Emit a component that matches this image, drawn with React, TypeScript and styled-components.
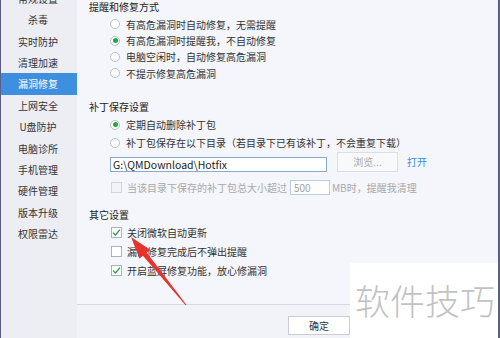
import React from 'react';
import styled, { createGlobalStyle } from 'styled-components';

const GlobalStyle = createGlobalStyle`
  body {
    margin: 0;
    background: #fff;
    font-family: "Noto Sans CJK SC", "Noto Sans", sans-serif;
  }
`;

const Window = styled.div`
  position: relative;
  width: 500px;
  height: 338px;
  box-sizing: border-box;
  display: flex;
  border-left: 1px solid #5b5f86;
  border-right: 2px solid #5b5f86;
  overflow: hidden;
  font-size: 10px;
  color: #333;
`;

const Sidebar = styled.div`
  width: 76px;
  flex-shrink: 0;
  background: #eceef4;
  overflow: hidden;
`;

const NavList = styled.ul`
  list-style: none;
  margin: -12.2px 0 0;
  padding: 0;
`;

const NavItem = styled.li<{ $active?: boolean }>`
  height: 21.4px;
  line-height: 21.4px;
  text-align: center;
  padding-right: 2px;
  background: ${(p) => (p.$active ? '#3f8fe0' : 'transparent')};
  color: ${(p) => (p.$active ? '#fff' : '#333')};
`;

const Main = styled.div`
  flex: 1;
  display: flex;
  flex-direction: column;
  background: #f4f6fc;
`;

const Content = styled.div`
  flex: 1;
  padding-left: 12px;
`;

const Title = styled.div<{ $top: number }>`
  margin-top: ${(p) => p.$top}px;
  height: 12px;
  line-height: 12px;
  color: #222;
`;

const OptionList = styled.div<{ $top: number }>`
  margin-top: ${(p) => p.$top}px;
  padding-left: 21px;
`;

const Option = styled.div<{ $h: number; $disabled?: boolean }>`
  display: flex;
  align-items: center;
  height: ${(p) => p.$h}px;
  color: ${(p) => (p.$disabled ? '#a9a9a9' : '#333')};
  white-space: nowrap;
`;

const Radio = styled.span<{ $checked?: boolean }>`
  position: relative;
  width: 10px;
  height: 10px;
  box-sizing: border-box;
  border: 1px solid #bcbfc7;
  border-radius: 50%;
  background: #fff;
  margin-right: 6px;
  flex-shrink: 0;

  &::after {
    content: '';
    display: ${(p) => (p.$checked ? 'block' : 'none')};
    position: absolute;
    left: 1.5px;
    top: 1.5px;
    width: 5px;
    height: 5px;
    border-radius: 50%;
    background: #1fa845;
  }
`;

const Box = styled.span<{ $disabled?: boolean }>`
  display: flex;
  align-items: center;
  justify-content: center;
  width: 11px;
  height: 11px;
  box-sizing: border-box;
  border: 1px solid ${(p) => (p.$disabled ? '#d3d5db' : '#aeb1b8')};
  background: ${(p) => (p.$disabled ? '#f2f3f6' : '#fff')};
  margin: 0 5px 0 1px;
  flex-shrink: 0;
`;

const PathRow = styled.div`
  display: flex;
  align-items: flex-end;
  height: 20px;
  padding-left: 21px;
`;

const PathInput = styled.div`
  width: 217px;
  height: 15px;
  box-sizing: border-box;
  border: 1px solid #86aad6;
  background: #fff;
  color: #222;
  font-size: 10.5px;
  line-height: 13px;
  padding-left: 2px;
`;

const BrowseButton = styled.div`
  width: 61px;
  height: 20px;
  box-sizing: border-box;
  margin-left: 10px;
  border: 1px solid #dcdee4;
  background: #f8f9fb;
  color: #a8a8a8;
  text-align: center;
  line-height: 18px;
`;

const OpenLink = styled.span`
  align-self: center;
  margin-left: 9px;
  color: #3c8fe2;
`;

const SizeInput = styled.span`
  width: 40px;
  height: 15px;
  box-sizing: border-box;
  margin: 0 2px 0 3px;
  padding-left: 3px;
  border: 1px solid #b9cde8;
  background: #fff;
  color: #a0a0a0;
  line-height: 13px;
`;

const Footer = styled.div`
  height: 34px;
  box-sizing: border-box;
  border-top: 1px solid #d6d9e2;
  background: #f1f3f9;
  display: flex;
  justify-content: flex-end;
  align-items: flex-start;
  padding: 11px 148px 0 0;
`;

const Button = styled.div`
  width: 62px;
  height: 19px;
  box-sizing: border-box;
  border: 1px solid #c9ccd4;
  background: #fff;
  color: #333;
  text-align: center;
  line-height: 17px;
`;

const Watermark = styled.div`
  position: absolute;
  right: -2px;
  bottom: 0;
  width: 150px;
  height: 75px;
  background: #fff;
  display: flex;
  align-items: center;
  padding: 0 0 3px 5px;
  box-sizing: border-box;
  color: #c2c2c2;
  font-size: 35px;
  font-weight: 300;
`;

const Arrow = styled.svg`
  position: absolute;
  left: -1px;
  top: 0;
  pointer-events: none;
`;

const Check = () => (
  <svg width="9" height="9" viewBox="0 0 9 9">
    <path d="M1 4.6 L3.4 7 L8 1.6" fill="none" stroke="#2a9d48" strokeWidth="1.3" />
  </svg>
);

const nav = ['常规设置', '杀毒', '实时防护', '清理加速', '漏洞修复', '上网安全', 'U盘防护', '电脑诊所', '手机管理', '硬件管理', '版本升级', '权限雷达'];

const reminders = [
  { label: '有高危漏洞时自动修复，无需提醒', checked: false },
  { label: '有高危漏洞时提醒我，不自动修复', checked: true },
  { label: '电脑空闲时，自动修复高危漏洞', checked: false },
  { label: '不提示修复高危漏洞', checked: false },
];

const others = [
  { label: '关闭微软自动更新', checked: true },
  { label: '漏洞修复完成后不弹出提醒', checked: false },
  { label: '开启蓝屏修复功能，放心修漏洞', checked: true },
];

export default function App() {
  return (
    <>
      <GlobalStyle />
      <Window>
        <Sidebar>
          <NavList>
            {nav.map((n) => (
              <NavItem key={n} $active={n === '漏洞修复'}>
                {n}
              </NavItem>
            ))}
          </NavList>
        </Sidebar>
        <Main>
          <Content>
            <Title $top={1}>提醒和修复方式</Title>
            <OptionList $top={3}>
              {reminders.map((r) => (
                <Option key={r.label} $h={16.4}>
                  <Radio $checked={r.checked} />
                  {r.label}
                </Option>
              ))}
            </OptionList>

            <Title $top={19.4}>补丁保存设置</Title>
            <OptionList $top={3}>
              <Option $h={18}>
                <Radio $checked />
                定期自动删除补丁包
              </Option>
              <Option $h={18}>
                <Radio />
                补丁包保存在以下目录（若目录下已有该补丁，不会重复下载）
              </Option>
            </OptionList>
            <PathRow>
              <PathInput>G:\QMDownload\Hotfix</PathInput>
              <BrowseButton>浏览...</BrowseButton>
              <OpenLink>打开</OpenLink>
            </PathRow>
            <OptionList $top={8}>
              <Option $h={16} $disabled>
                <Box $disabled />
                当该目录下保存的补丁包总大小超过
                <SizeInput>500</SizeInput>
                MB时，提醒我清理
              </Option>
            </OptionList>

            <Title $top={13}>其它设置</Title>
            <OptionList $top={2.5}>
              {others.map((o) => (
                <Option key={o.label} $h={19}>
                  <Box>{o.checked && <Check />}</Box>
                  {o.label}
                </Option>
              ))}
            </OptionList>
          </Content>
          <Footer>
            <Button>确定</Button>
          </Footer>
        </Main>

        <Arrow width="500" height="338" viewBox="0 0 500 338">
          <polygon
            points="131,237 139.4,258.5 142.9,255.7 185.6,305.3 186.4,304.7 146.7,252.5 150.2,249.7"
            fill="#e4342c"
          />
        </Arrow>
        <Watermark>软件技巧</Watermark>
      </Window>
    </>
  );
}
